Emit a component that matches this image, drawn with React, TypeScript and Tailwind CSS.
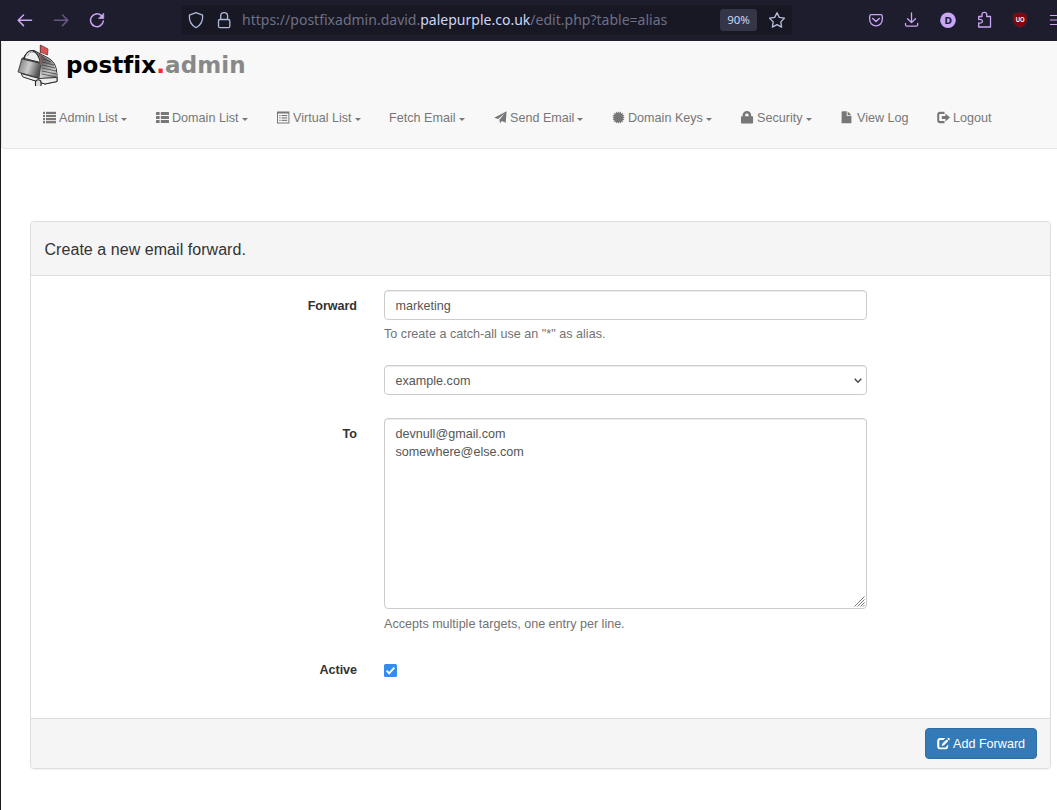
import React from "react";

function Glyph({ children, w = 13 }: { children: React.ReactNode; w?: number }) {
  return (
    <svg width={w} height="13" viewBox={`0 0 ${w} 13`} fill="currentColor" className="block shrink-0">
      {children}
    </svg>
  );
}

const rows = [0.8, 3.9, 7, 10.1];
const ListIcon = () => (
  <Glyph>
    {rows.map((y) => (
      <g key={y}>
        <rect x="0" y={y} width="2" height="2.2" />
        <rect x="3" y={y} width="10" height="2.2" />
      </g>
    ))}
  </Glyph>
);
const ThListIcon = () => (
  <Glyph>
    {[0.9, 5, 9.1].map((y) => (
      <g key={y}>
        <rect x="0" y={y} width="3.6" height="3" rx="0.5" />
        <rect x="4.8" y={y} width="8.2" height="3" rx="0.5" />
      </g>
    ))}
  </Glyph>
);
const ListAltIcon = () => (
  <Glyph>
    <path fillRule="evenodd" d="M0 .5h12.4v12H0zM1 2.600v8.900h10.400V2.600z" />
    {[4, 6.4, 8.8].map((y) => (
      <g key={y}>
        <rect x="2.3" y={y} width="1.2" height="1.1" />
        <rect x="4.5" y={y} width="5.7" height="1.1" />
      </g>
    ))}
  </Glyph>
);
const SendIcon = () => (
  <Glyph>
    <path d="M12.6.2 11.7 11.800 7.900 9.900 6 12.300 5.400 8.800 10.800 2.300 4.100 8 .2 6.800z" />
  </Glyph>
);
const CertificateIcon = () => (
  <Glyph>
    <path d="m6.500 .2.9 1.900L9 .6l.2 2.100 2-.9-.8 2 2.100.2-1.500 1.600 1.700.9-1.700 1 1.500 1.500-2.100.3.800 1.900-2-.8L9 12.400l-1.600-1.500-.9 1.900-1-1.900-1.500 1.500-.3-2-1.900.8.8-1.900L.5 9 2 7.500.3 6.500 2 5.600.500 4l2.100-.2-.8-2 1.900.9L4 .6l1.500 1.500z" />
  </Glyph>
);
const LockIcon = () => (
  <Glyph>
    <path fillRule="evenodd" d="M1.600 5.200V4.200C1.600 1.900 3.500.1 5.900.1s4.300 1.800 4.300 4.100v1h1.100c.5 0 .8.3.8.8v5.800c0 .5-.3.800-.8.800H.8c-.5 0-.8-.3-.8-.8V6c0-.5.3-.8.8-.8zM4.200 5.200h3.400V4.200c0-1-.7-1.700-1.700-1.700s-1.700.7-1.700 1.700z" />
  </Glyph>
);
const FileIcon = () => (
  <Glyph>
    <path d="M1.200.2h4.500v4.900h4.700v7.200H.6V.8zM6.600.3l3.800 3.900H6.600z" />
  </Glyph>
);
const LogoutIcon = () => (
  <Glyph>
    <path d="M7.500 .8H3C1.400.800.2 1.900.2 3.500v6c0 1.600 1.200 2.700 2.800 2.700h4.500v-2.100H3c-.5 0-.8-.3-.8-.8V3.700c0-.5.3-.8.8-.8h4.500zM8.400 2.600 13 6.500l-4.600 3.900V8H4.800V5h3.600z" />
  </Glyph>
);
const EditIcon = () => (
  <Glyph>
    <path d="M8.300 1H3.200C1.400 1 .2 2.200.2 3.900v5.500c0 1.700 1.200 2.900 3 2.900h5.100c1.700 0 2.900-1.200 2.900-2.900V7.400l-2 2c0 .6-.4 1-1 1H3.300c-.6 0-1-.4-1-1V4.100c0-.6.4-1 1-1h3z" />
    <path d="m9.600 2.400 1.700 1.700-4.200 4.200-2.400.7.7-2.400zM10.300 1.700l.8-.8c.3-.3.600-.3.900 0l.7.7c.3.3.3.7 0 1l-.7.8z" />
  </Glyph>
);

function NavItem({ icon, label, caret = true, cls, textCls }: { icon?: React.ReactNode; label: string; caret?: boolean; cls: string; textCls: string }) {
  return (
    <a className={`flex shrink-0 items-center ${cls}`}>
      {icon && <span className="w-4 shrink-0">{icon}</span>}
      <span className={`shrink-0 whitespace-nowrap ${textCls}`}>{label}</span>
      {caret && (
        <svg width="6" height="3" viewBox="0 0 6 3" fill="currentColor" className="mt-[3px] shrink-0">
          <path d="M0 0h6L3 3z" />
        </svg>
      )}
    </a>
  );
}

function Mailbox() {
  return (
    <svg width="42" height="44" viewBox="0 0 42 44" className="shrink-0">
      <defs>
        <linearGradient id="door" x1="0" y1="0" x2="1" y2="0.3">
          <stop offset="0" stopColor="#444" />
          <stop offset="0.25" stopColor="#999" />
          <stop offset="0.55" stopColor="#ccc" />
          <stop offset="1" stopColor="#555" />
        </linearGradient>
        <linearGradient id="body" x1="0.3" y1="0" x2="0.7" y2="1">
          <stop offset="0" stopColor="#333" />
          <stop offset="0.4" stopColor="#777" />
          <stop offset="0.75" stopColor="#ccc" />
          <stop offset="1" stopColor="#888" />
        </linearGradient>
      </defs>
      <path d="M6 15C9 9 12 6 17 6.500l15 8c6 4 8.500 9 8 23L28 40 7 33z" fill="#ddd" stroke="#222" strokeWidth="1" />
      <path d="M17 7c6 3 8 7 6.500 26L39 37c1.500-13-1-18-8-22z" fill="url(#body)" />
      <path d="m26 15 8 3M25 18l12 3M25 21l13 3M25 24l14 3M25 27l14 3M25 30l14 3" stroke="#333" strokeWidth=".7" />
      <path d="M5 14 24 19l-2 15L1 28z" fill="url(#door)" stroke="#333" strokeWidth=".8" />
      <path d="M7 14.500c2-6 5-8.500 9-7.500 4 1.500 6 5 7.500 11.500z" fill="#eee" stroke="#222" strokeWidth="1.1" />
      <path d="M10.500 12c1.500-3.500 3.500-4.500 6-3.500" fill="none" stroke="#999" />
      <path d="m5 14 19 4.500V20L5 15.500z" fill="#444" />
      <path d="m4 29.500 18 5 18-1v4l-12 2.500L6 33z" fill="#eee" stroke="#222" strokeWidth=".9" />
      <path d="M18.500 42v-4c.5-3 5-3 5.500 0v4" fill="#ddd" stroke="#222" strokeWidth="1.1" />
      <path d="M23.500 1v20" stroke="#8b6060" strokeWidth="1.5" />
      <path d="m23.500 1 7.500 4-.5 6-7-3z" fill="#dc5454" stroke="#6f3838" strokeWidth=".8" />
    </svg>
  );
}

function BrowserBar() {
  return (
    <header className="flex h-[41px] w-full shrink-0 items-center bg-[#1e1d2d] pb-px">
      <svg width="181" height="40" viewBox="0 0 181 40" fill="none" stroke="#cba6f7" strokeWidth="1.5" strokeLinecap="round" strokeLinejoin="round" className="shrink-0">
        <path d="M31.500 20.300h-13M23.500 15l-5.300 5.300 5.300 5.300" />
        <path d="M54.500 20.300h13M62.500 15l5.300 5.300-5.300 5.300" stroke="#6a5685" />
        <path d="M103.300 21a6.400 6.400 0 1 1-2.200-5.600" />
        <path d="M103.700 13.500v5h-5z" fill="#cba6f7" strokeWidth=".7" />
      </svg>
      <div className="flex h-[30px] w-[611px] shrink-0 items-center rounded-[3px] bg-[#181824]">
        <svg width="61" height="30" viewBox="1 0 61 30" fill="none" stroke="#aeb8d8" strokeWidth="1.3" strokeLinejoin="round" className="shrink-0">
          <path d="m16 7.600 6.600 2.600c.5 5.300-1.600 9.800-6.600 12.500-5-2.700-7.100-7.200-6.600-12.500z" />
          <rect x="38.500" y="14.500" width="11.300" height="8.200" rx="1.500" />
          <path d="M40.700 14.300V11c0-4.600 6.900-4.600 6.900 0v3.300" />
        </svg>
        <div className="w-[478px] whitespace-nowrap pb-px font-['Noto_Sans',sans-serif] text-[14.02px] leading-[20px] text-[#6d7085]">
          https://postfixadmin.david.<span className="text-[#cdd6f4]">palepurple.co.uk</span>/edit.php?table=alias
        </div>
        <span className="flex h-[22px] w-[37px] items-center justify-center rounded-[3px] bg-[#343546] font-['Noto_Sans',sans-serif] text-[11.5px] text-[#cdd6f4]">90%</span>
        <svg width="32" height="30" viewBox="0 0 32 30" fill="none" stroke="#bac2de" strokeWidth="1.3" strokeLinejoin="round" className="shrink-0">
          <path d="m20 7.700 2.300 4.700 5.200.7-3.700 3.800.8 5.200-4.600-2.400-4.600 2.400.8-5.200-3.700-3.800 5.200-.7z" />
        </svg>
      </div>
      <svg width="265" height="40" viewBox="0 0 265 40" fill="none" stroke="#cba6f7" strokeWidth="1.3" strokeLinecap="round" strokeLinejoin="round" className="shrink-0">
        <path d="M79.200 14.700h9.600q1.500 0 1.500 1.500v3.300a6.300 6.300 0 0 1-12.600 0v-3.300q0-1.500 1.500-1.500z" />
        <path d="m80.700 18.500 3.300 3 3.300-3" strokeWidth="1.500" />
        <path d="M119.500 13v9.500M115.500 18.700l4 3.900 4-3.900M113.500 23.500v1.200q0 1.500 1.500 1.500h9.200q1.500 0 1.500-1.500v-1.200" />
        <circle cx="156" cy="20.300" r="7.800" fill="#cba6f7" stroke="none" />
        <path d="M190 16.500h-3.300v3c5-1 5 4.500 0 3.500v4h11.800V16.500h-3.800v-2c0-2.800-4.700-2.800-4.700 0z" />
        <path d="m228 12.700 6.600 1.700v6q0 4.500-6.600 7-6.600-2.500-6.600-7v-6z" fill="#820609" stroke="#572332" strokeWidth=".8" />
        <path d="M258.500 15.500h14M258.500 20h14M258.500 24.500h14" strokeWidth="1.200" />
        <text x="152.500" y="23.700" fontSize="9" fontWeight="bold" fontFamily="DejaVu Sans, sans-serif" fill="#1e1d2d" stroke="none">D</text>
        <text x="223.700" y="22" fontSize="7" fontWeight="bold" fontFamily="Liberation Sans, sans-serif" fill="#fff" stroke="none" textLength="8.800" lengthAdjust="spacingAndGlyphs">UO</text>
      </svg>
    </header>
  );
}

const field = "border border-[#ccc] bg-white text-[#555] rounded-[4px] shadow-[inset_0_1px_1px_rgba(0,0,0,0.075)] pl-[10.5px] outline-none";

export default function App() {
  return (
    <div className="h-[810px] w-[1057px] overflow-hidden bg-white font-['Liberation_Sans',Arial,sans-serif] text-[12.6px] leading-[18px] text-[#333]">
      <BrowserBar />
      <div className="h-[769px] border-l border-[#1b1a20]">
        <nav className="h-[108px] rounded-l-[4px] border-b border-l border-[#e7e7e7] bg-[#f8f8f8] text-[#777]">
          <div className="flex h-[63px] items-start pl-[15px] pt-[3px]">
            <Mailbox />
            <div className="ml-[7px] mt-[7px] whitespace-nowrap font-['DejaVu_Sans',sans-serif] text-[23px] font-bold leading-7 tracking-[0.08px] text-[#888]">
              <span className="text-black">postfix</span><span className="text-[#f22]">.</span>admin
            </div>
          </div>
          <div className="flex h-[27px] items-center pl-[41px]">
            <NavItem icon={<ListIcon />} label="Admin List" cls="w-[113px]" textCls="w-[62px]" />
            <NavItem icon={<ThListIcon />} label="Domain List" cls="w-[121px]" textCls="w-[70px]" />
            <NavItem icon={<ListAltIcon />} label="Virtual List" cls="w-[112px]" textCls="w-[62px]" />
            <NavItem label="Fetch Email" cls="w-[105px]" textCls="w-[70px]" />
            <NavItem icon={<SendIcon />} label="Send Email" cls="w-[118px]" textCls="w-[67px]" />
            <NavItem icon={<CertificateIcon />} label="Domain Keys" cls="w-[129px]" textCls="w-[78px]" />
            <NavItem icon={<LockIcon />} label="Security" cls="w-[100px]" textCls="w-[49px]" />
            <NavItem icon={<FileIcon />} label="View Log" caret={false} cls="w-[96px]" textCls="w-[60px]" />
            <NavItem icon={<LogoutIcon />} label="Logout" caret={false} cls="w-[60px]" textCls="w-[44px]" />
          </div>
        </nav>

        <form className="ml-[29px] mt-[72px] flex h-[548px] w-[1021px] flex-col rounded-[4px] border border-[#ddd] shadow-[0_1px_1px_rgba(0,0,0,0.05)]" onSubmit={(e) => e.preventDefault()}>
          <div className="flex h-[54px] shrink-0 items-center rounded-t-[3px] border-b border-[#ddd] bg-[#f5f5f5] pl-[13.5px] pt-[2px] text-[16px] tracking-[0.05px]">
            <span>Create a new email forward.</span>
          </div>
          <div className="flex flex-1 flex-col pt-[14px]">
            <div className="flex h-[75px]">
              <label className="w-[326px] pt-[7px] text-right font-bold tracking-[-0.05px]">Forward</label>
              <div className="ml-[27px] w-[483px]">
                <input className={`block h-[30px] w-full pt-[2px] ${field}`} defaultValue="marketing" />
                <p className="mt-[5px] text-[#737373] tracking-[0.01px]">To create a catch-all use an "*" as alias.</p>
              </div>
            </div>
            <div className="ml-[353px] flex h-[53px] w-[483px]">
              <div className={`flex h-[30px] w-full items-center justify-between pr-1 ${field}`}>
                <span className="pt-px">example.com</span>
                <svg width="8" height="6" viewBox="0 0 8 6" fill="none" stroke="#444" strokeWidth="1.3" className="mt-px"><path d="m.7.8 3.300 3.500L7.300.8" /></svg>
              </div>
            </div>
            <div className="flex h-[242px]">
              <label className="w-[326px] pt-[7px] text-right font-bold">To</label>
              <div className="ml-[27px] w-[483px]">
                <div className={`flex h-[191px] w-full flex-col justify-between pt-[6px] ${field}`}>
                  <div className="whitespace-pre">{"devnull@gmail.com\nsomewhere@else.com"}</div>
                  <svg width="11" height="11" viewBox="0 0 11 11" stroke="#777" strokeWidth="1" className="mb-px mr-px self-end"><path d="m.5 10.500 10-10M3.500 10.500l7-7M6.500 10.500l4-4M9 10.500l1.500-1.500" /></svg>
                </div>
                <p className="mt-[6px] text-[#737373] tracking-[-0.02px]">Accepts multiple targets, one entry per line.</p>
              </div>
            </div>
            <div className="flex">
              <label className="w-[326px] pt-px text-right font-bold tracking-[-0.05px]">Active</label>
              <svg width="13" height="13" viewBox="0 0 13 13" className="ml-[27px] mt-[4px]">
                <rect width="13" height="13" rx="1.5" fill="#358deb" />
                <path d="m2.600 6.700 2.600 2.600 5.100-5.600" fill="none" stroke="white" strokeWidth="1.9" />
              </svg>
            </div>
          </div>
          <footer className="flex h-[50px] shrink-0 items-center justify-end rounded-b-[3px] border-t border-[#ddd] bg-[#f5f5f5] pr-[13px]">
            <button className="flex h-[31px] w-[112px] items-center rounded-[4px] border border-[#2e6da4] bg-[#337ab7] pl-[11px] text-white">
              <EditIcon />
              <span className="ml-[3px] whitespace-nowrap">Add Forward</span>
            </button>
          </footer>
        </form>
      </div>
    </div>
  );
}
